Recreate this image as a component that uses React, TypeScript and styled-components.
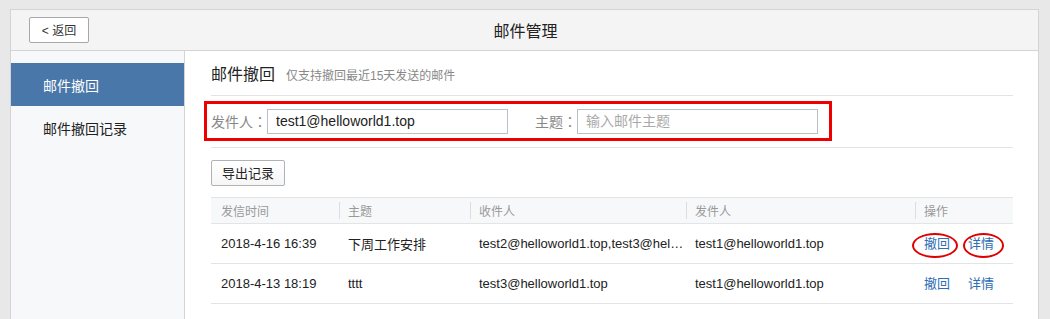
import React from "react";
import styled, { createGlobalStyle } from "styled-components";

const Global = createGlobalStyle`
  html, body { margin: 0; padding: 0; background: #e8e8e9; overflow: hidden; }
  body { font-family: "Liberation Sans", Arial, "Noto Sans CJK SC", sans-serif; color: #333; }
  * { box-sizing: border-box; }
`;

const Frame = styled.div`
  margin: 9px 11px 0 10px;
  border: 1px solid #d4d4d6;
  background: #fff;
  min-height: 340px;
  display: flex;
  flex-direction: column;
`;

const Header = styled.div`
  height: 41px;
  background: #f4f4f4;
  border-bottom: 1px solid #d4d4d6;
  display: grid;
  grid-template-columns: 1fr auto 1fr;
  align-items: center;
  padding: 0 18px;
`;

const BackButton = styled.button`
  justify-self: start;
  width: 60px;
  height: 26px;
  margin-top: -1px;
  border: 1px solid #a5a8ad;
  border-radius: 2px;
  background: #fff;
  font: 12px "Liberation Sans", Arial, "Noto Sans CJK SC", sans-serif;
  color: #333;
  padding: 0;
`;

const HeaderTitle = styled.div`
  font-size: 16px;
  color: #222;
  margin-left: 2px;
`;

const Body = styled.div`
  flex: 1;
  display: flex;
`;

const Sidebar = styled.nav`
  width: 174px;
  background: #f7f8fa;
  border-right: 1px solid #d4d4d6;
  padding-top: 12px;
  display: flex;
  flex-direction: column;
`;

const NavItem = styled.div<{ $active?: boolean }>`
  height: 43px;
  display: flex;
  align-items: center;
  padding-left: 32px;
  font-size: 14px;
  background: ${(p) => (p.$active ? "#4a77a9" : "transparent")};
  color: ${(p) => (p.$active ? "#fff" : "#222")};
`;

const Main = styled.main`
  flex: 1;
  padding: 0 25px 0 26px;
`;

const TitleRow = styled.div`
  height: 45px;
  display: flex;
  align-items: center;
  gap: 11px;
  border-bottom: 1px solid #e3e4e6;
`;

const PageTitle = styled.h1`
  margin: 0;
  font-size: 16px;
  font-weight: normal;
  color: #222;
`;

const SubTitle = styled.span`
  font-size: 12px;
  color: #888;
  margin-top: 2px;
`;

const FilterRow = styled.div`
  height: 52px;
  border-bottom: 1px solid #e3e4e6;
  padding-top: 5px;
`;

const Highlight = styled.div`
  display: inline-flex;
  align-items: center;
  height: 40px;
  width: 628px;
  margin-left: -7px;
  padding-left: 4px;
  border: 3px solid #ee0000;
`;

const Label = styled.span<{ $gap?: number }>`
  font-family: "Noto Sans CJK JP", "Noto Sans CJK SC", sans-serif;
  font-size: 14px;
  color: #888;
  margin-left: ${(p) => p.$gap ?? 0}px;
`;

const TextInput = styled.input`
  width: 241px;
  height: 25px;
  border: 1px solid #b9c0c8;
  padding: 0 0 0 8px;
  font: 14px "Liberation Sans", Arial, "Noto Sans CJK SC", sans-serif;
  color: #222;
  outline: none;
  &::placeholder { color: #aaa; }
`;

const ToolRow = styled.div`
  height: 50px;
  display: flex;
  align-items: center;
  padding-bottom: 1px;
  border-bottom: 1px solid #e3e4e6;
`;

const Button = styled.button`
  width: 74px;
  height: 26px;
  margin-top: 1px;
  border: 1px solid #b0b2b5;
  border-radius: 2px;
  background: linear-gradient(#ffffff, #f6f6f6);
  font: 13px "Liberation Sans", Arial, "Noto Sans CJK SC", sans-serif;
  color: #222;
  padding: 0;
`;

const COLS = "128px 131px 216px 229px 1fr";

const HeadRow = styled.div`
  display: grid;
  grid-template-columns: ${COLS};
  height: 26px;
  background: #f7f8fa;
  border-bottom: 1px solid #e3e4e6;
`;

const HeadCell = styled.div<{ $sep?: boolean }>`
  display: flex;
  align-items: center;
  padding-left: ${(p) => (p.$sep ? 9 : 10)}px;
  font-size: 12px;
  color: #999;
  position: relative;
  ${(p) =>
    p.$sep
      ? `&::before { content: ""; position: absolute; left: 0; top: 4px; bottom: 4px; width: 1px; background: #dcdde0; }`
      : ""}
`;

const Row = styled.div`
  display: grid;
  grid-template-columns: ${COLS};
  height: 40px;
  border-bottom: 1px solid #e3e4e6;
`;

const Cell = styled.div<{ $first?: boolean }>`
  display: flex;
  align-items: center;
  padding: 0 2px 0 ${(p) => (p.$first ? 10 : 9)}px;
  font-size: 13px;
  color: #222;
  min-width: 0;
`;

const Ellipsis = styled.span`
  white-space: nowrap;
  overflow: hidden;
  text-overflow: ellipsis;
`;

const Actions = styled.div`
  display: flex;
  align-items: center;
  gap: 18px;
  padding-left: 9px;
  font-size: 13px;
`;

const Link = styled.a`
  position: relative;
  display: inline-block;
  line-height: 20px;
  color: #2f6db5;
  text-decoration: none;
`;

const Circle = styled.span<{ $l: number; $r: number }>`
  position: absolute;
  left: ${(p) => p.$l}px;
  right: ${(p) => p.$r}px;
  top: -1px;
  bottom: -4px;
  border: 2px solid #e00000;
  border-radius: 50%;
`;

const rows = [
  {
    time: "2018-4-16 16:39",
    subject: "下周工作安排",
    to: "test2@helloworld1.top,test3@helloworld1.top",
    from: "test1@helloworld1.top",
    marked: true,
  },
  {
    time: "2018-4-13 18:19",
    subject: "tttt",
    to: "test3@helloworld1.top",
    from: "test1@helloworld1.top",
    marked: false,
  },
];

export default function App() {
  return (
    <>
      <Global />
      <Frame>
        <Header>
          <BackButton>&lt; 返回</BackButton>
          <HeaderTitle>邮件管理</HeaderTitle>
          <span />
        </Header>
        <Body>
          <Sidebar>
            <NavItem $active>邮件撤回</NavItem>
            <NavItem>邮件撤回记录</NavItem>
          </Sidebar>
          <Main>
            <TitleRow>
              <PageTitle>邮件撤回</PageTitle>
              <SubTitle>仅支持撤回最近15天发送的邮件</SubTitle>
            </TitleRow>
            <FilterRow>
              <Highlight>
                <Label>发件人：</Label>
                <TextInput defaultValue="test1@helloworld1.top" />
                <Label $gap={27}>主题：</Label>
                <TextInput placeholder="输入邮件主题" />
              </Highlight>
            </FilterRow>
            <ToolRow>
              <Button>导出记录</Button>
            </ToolRow>
            <HeadRow>
              <HeadCell>发信时间</HeadCell>
              <HeadCell $sep>主题</HeadCell>
              <HeadCell $sep>收件人</HeadCell>
              <HeadCell $sep>发件人</HeadCell>
              <HeadCell $sep>操作</HeadCell>
            </HeadRow>
            {rows.map((r) => (
              <Row key={r.time}>
                <Cell $first>{r.time}</Cell>
                <Cell>{r.subject}</Cell>
                <Cell>
                  <Ellipsis>{r.to}</Ellipsis>
                </Cell>
                <Cell>{r.from}</Cell>
                <Actions>
                  <Link>
                    撤回
                    {r.marked && <Circle $l={-12} $r={-8} />}
                  </Link>
                  <Link>
                    详情
                    {r.marked && <Circle $l={-5} $r={-10} />}
                  </Link>
                </Actions>
              </Row>
            ))}
          </Main>
        </Body>
      </Frame>
    </>
  );
}
